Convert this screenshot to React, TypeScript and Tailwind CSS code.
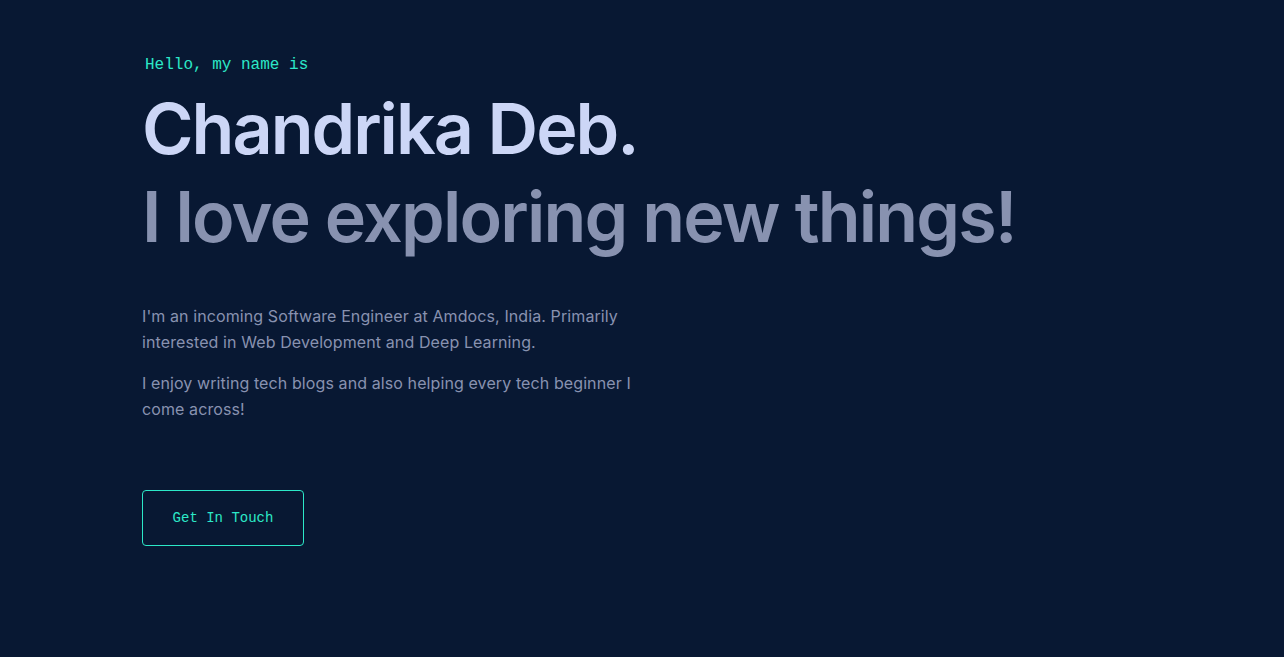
import React from "react";

const mono = "font-['Liberation_Mono','DejaVu_Sans_Mono',monospace]";
const sans = "font-['Inter','Lato',sans-serif]";

export default function App() {
  return (
    <div className="min-h-screen bg-[#081833]">
      <section className="pl-[142px] pt-[55px] pb-[111px]">
        {/* greeting */}
        <h1 className={`${mono} text-[#2ce8c8] text-[16px] leading-[20px] ml-[3px] mb-[10px]`}>
          Hello, my name is
        </h1>
        <h2 className={`${sans} text-[#ccd6f6] text-[70px] font-semibold leading-[88px] tracking-[-2px]`}>
          Chandrika Deb.
        </h2>
        <h3 className={`${sans} text-[#8892b0] text-[70px] font-semibold leading-[88px] tracking-[-1.8px]`}>
          I love exploring new things!
        </h3>

        <div className={`${sans} text-[#8892b0] text-[16px] leading-[26px] tracking-[0.1px] max-w-[500px] mt-[42px]`}>
          <p className="mb-[15px]">
            I'm an incoming Software Engineer at Amdocs, India. Primarily interested in Web Development and Deep
            Learning.
          </p>
          <p>I enjoy writing tech blogs and also helping every tech beginner I come across!</p>
        </div>

        <button
          className={`${mono} mt-[68px] w-[162px] h-[56px] border border-[#2ce8c8] rounded-[4px] text-[#2ce8c8] text-[14px] bg-transparent`}
        >
          Get In Touch
        </button>
      </section>
    </div>
  );
}
